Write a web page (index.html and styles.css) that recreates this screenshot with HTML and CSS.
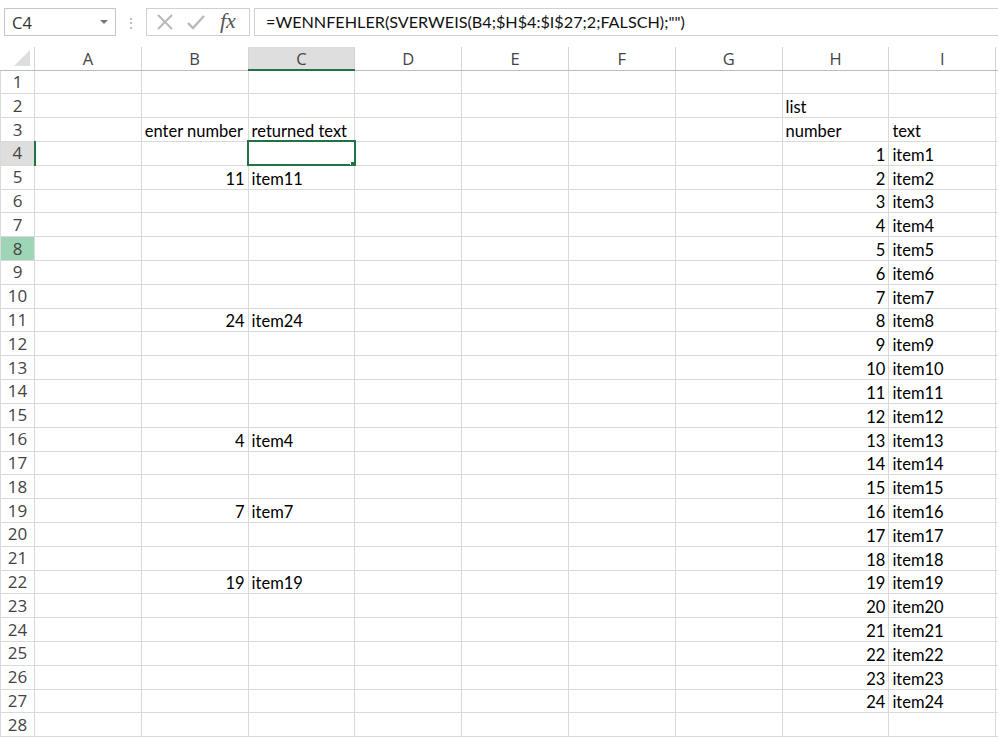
FILE: index.html
```html
<!DOCTYPE html>
<html>
<head>
<meta charset="utf-8">
<link rel="stylesheet" href="styles.css">
</head>
<body>
<div class="app">
  <div class="fbar">
    <div class="namebox"><span class="nb-text">C4</span><span class="nb-arrow"></span></div>
    <div class="dots">⋮</div>
    <div class="btns">
      <svg class="ico" width="22" height="22" viewBox="0 0 22 22"><path d="M4 4 L18 18 M18 4 L4 18" stroke="#b9b9b9" stroke-width="2" fill="none"/></svg>
      <svg class="ico" width="22" height="22" viewBox="0 0 22 22"><path d="M3 12 L8 17 L19 5" stroke="#b9b9b9" stroke-width="2.4" fill="none"/></svg>
      <span class="fx">fx</span>
    </div>
    <div class="formula">=WENNFEHLER(SVERWEIS(B4;$H$4:$I$27;2;FALSCH);"")</div>
  </div>
  <table class="sheet">
    <colgroup><col class="c-rh"><col class="c"><col class="c"><col class="c"><col class="c"><col class="c"><col class="c"><col class="c"><col class="c"><col class="c"><col class="c-rest"></colgroup>
    <thead>
      <tr class="hdr"><th class="corner"><span class="tri"></span></th><th>A</th><th>B</th><th class="sel-col">C</th><th>D</th><th>E</th><th>F</th><th>G</th><th>H</th><th>I</th><th></th></tr>
    </thead>
    <tbody>
      <tr><th>1</th><td></td><td></td><td></td><td></td><td></td><td></td><td></td><td></td><td></td><td></td></tr>
      <tr><th>2</th><td></td><td></td><td></td><td></td><td></td><td></td><td></td><td>list</td><td></td><td></td></tr>
      <tr><th>3</th><td></td><td>enter number</td><td>returned text</td><td></td><td></td><td></td><td></td><td>number</td><td>text</td><td></td></tr>
      <tr><th class="sel-row">4</th><td></td><td></td><td class="active"><span class="handle"></span></td><td></td><td></td><td></td><td></td><td class="n">1</td><td>item1</td><td></td></tr>
      <tr><th>5</th><td></td><td class="n">11</td><td>item11</td><td></td><td></td><td></td><td></td><td class="n">2</td><td>item2</td><td></td></tr>
      <tr><th>6</th><td></td><td></td><td></td><td></td><td></td><td></td><td></td><td class="n">3</td><td>item3</td><td></td></tr>
      <tr><th>7</th><td></td><td></td><td></td><td></td><td></td><td></td><td></td><td class="n">4</td><td>item4</td><td></td></tr>
      <tr><th class="hov-row">8</th><td></td><td></td><td></td><td></td><td></td><td></td><td></td><td class="n">5</td><td>item5</td><td></td></tr>
      <tr><th>9</th><td></td><td></td><td></td><td></td><td></td><td></td><td></td><td class="n">6</td><td>item6</td><td></td></tr>
      <tr><th>10</th><td></td><td></td><td></td><td></td><td></td><td></td><td></td><td class="n">7</td><td>item7</td><td></td></tr>
      <tr><th>11</th><td></td><td class="n">24</td><td>item24</td><td></td><td></td><td></td><td></td><td class="n">8</td><td>item8</td><td></td></tr>
      <tr><th>12</th><td></td><td></td><td></td><td></td><td></td><td></td><td></td><td class="n">9</td><td>item9</td><td></td></tr>
      <tr><th>13</th><td></td><td></td><td></td><td></td><td></td><td></td><td></td><td class="n">10</td><td>item10</td><td></td></tr>
      <tr><th>14</th><td></td><td></td><td></td><td></td><td></td><td></td><td></td><td class="n">11</td><td>item11</td><td></td></tr>
      <tr><th>15</th><td></td><td></td><td></td><td></td><td></td><td></td><td></td><td class="n">12</td><td>item12</td><td></td></tr>
      <tr><th>16</th><td></td><td class="n">4</td><td>item4</td><td></td><td></td><td></td><td></td><td class="n">13</td><td>item13</td><td></td></tr>
      <tr><th>17</th><td></td><td></td><td></td><td></td><td></td><td></td><td></td><td class="n">14</td><td>item14</td><td></td></tr>
      <tr><th>18</th><td></td><td></td><td></td><td></td><td></td><td></td><td></td><td class="n">15</td><td>item15</td><td></td></tr>
      <tr><th>19</th><td></td><td class="n">7</td><td>item7</td><td></td><td></td><td></td><td></td><td class="n">16</td><td>item16</td><td></td></tr>
      <tr><th>20</th><td></td><td></td><td></td><td></td><td></td><td></td><td></td><td class="n">17</td><td>item17</td><td></td></tr>
      <tr><th>21</th><td></td><td></td><td></td><td></td><td></td><td></td><td></td><td class="n">18</td><td>item18</td><td></td></tr>
      <tr><th>22</th><td></td><td class="n">19</td><td>item19</td><td></td><td></td><td></td><td></td><td class="n">19</td><td>item19</td><td></td></tr>
      <tr><th>23</th><td></td><td></td><td></td><td></td><td></td><td></td><td></td><td class="n">20</td><td>item20</td><td></td></tr>
      <tr><th>24</th><td></td><td></td><td></td><td></td><td></td><td></td><td></td><td class="n">21</td><td>item21</td><td></td></tr>
      <tr><th>25</th><td></td><td></td><td></td><td></td><td></td><td></td><td></td><td class="n">22</td><td>item22</td><td></td></tr>
      <tr><th>26</th><td></td><td></td><td></td><td></td><td></td><td></td><td></td><td class="n">23</td><td>item23</td><td></td></tr>
      <tr><th>27</th><td></td><td></td><td></td><td></td><td></td><td></td><td></td><td class="n">24</td><td>item24</td><td></td></tr>
      <tr><th>28</th><td></td><td></td><td></td><td></td><td></td><td></td><td></td><td></td><td></td><td></td></tr>
    </tbody>
  </table>
</div>
</body>
</html>
```

FILE: styles.css
```css
html, body {
  margin: 0;
  padding: 0;
  background: #ffffff;
  overflow: hidden;
}
.app {
  width: 998px;
  height: 739px;
  overflow: hidden;
  font-family: "Lato", "Liberation Sans", sans-serif;
  color: #000;
}
.fbar {
  display: flex;
  align-items: center;
  height: 28px;
  padding: 8px 0 0 4px;
}
.namebox {
  box-sizing: border-box;
  width: 112px;
  height: 28px;
  border: 1px solid #c6c6c6;
  display: flex;
  align-items: center;
  justify-content: space-between;
  padding: 0 7px 0 7px;
  font-family: "Open Sans", sans-serif;
  font-size: 16.5px;
  color: #333;
}
.nb-arrow {
  width: 0;
  height: 0;
  border-left: 4px solid transparent;
  border-right: 4px solid transparent;
  border-top: 4px solid #777;
}
.dots {
  width: 30px;
  text-align: center;
  color: #aaa;
  font-size: 14px;
}
.btns {
  box-sizing: border-box;
  width: 104px;
  height: 28px;
  border: 1px solid #d0d0d0;
  display: flex;
  align-items: center;
  gap: 9px;
  padding-left: 7px;
}
.fx {
  font-family: "Liberation Serif", serif;
  font-style: italic;
  font-size: 22px;
  line-height: 22px;
  color: #555;
  margin-left: 4px;
  margin-top: -3px;
}
.formula {
  box-sizing: border-box;
  flex: 1;
  height: 28px;
  margin-left: 4px;
  border: 1px solid #d0d0d0;
  border-right: none;
  padding-left: 11px;
  font-size: 16.2px;
  line-height: 26px;
  color: #111;
  white-space: nowrap;
}
.sheet {
  margin-top: 11px;
  border-collapse: collapse;
  table-layout: fixed;
  width: 1010px;
}
.c-rh { width: 34px; }
.c { width: 106.8px; }
.c-rest { width: 14px; }
.sheet th, .sheet td {
  border: 1px solid #dadada;
  padding: 0 3px;
  white-space: nowrap;
  overflow: hidden;
  box-sizing: border-box;
}
.hdr th {
  height: 23px;
  line-height: 20px;
  padding-top: 1px;
  font-family: "Open Sans", sans-serif;
  font-weight: normal;
  font-size: 16.5px;
  color: #444;
  text-align: center;
  border-top: none;
  border-color: #d4d4d4;
  border-bottom-color: #bdbdbd;
}
.hdr th.corner {
  position: relative;
  border-left: none;
}
.tri {
  position: absolute;
  right: 4px;
  bottom: 4px;
  width: 0;
  height: 0;
  border-left: 16px solid transparent;
  border-bottom: 16px solid #dedede;
}
.hdr th.sel-col {
  background: #dedede;
  border-bottom: 2px solid #217346;
}
tbody tr {
  height: 23.82px;
}
tbody th {
  font-family: "Open Sans", sans-serif;
  font-weight: normal;
  font-size: 17px;
  color: #444;
  text-align: center;
  border-left: none;
  border-right-color: #bdbdbd;
  padding: 1px 0 0 0;
  line-height: 20px;
}
tbody th.sel-row {
  background: #dedede;
  border-right: 2px solid #217346;
}
tbody th.hov-row {
  background: #9fd5b7;
}
tbody td {
  font-size: 16.5px;
  padding-top: 0;
  padding-bottom: 0;
  line-height: 19px;
  vertical-align: bottom;
}
tbody td.n {
  text-align: right;
}
td.active {
  position: relative;
  outline: 2px solid #217346;
  outline-offset: -1px;
}
.handle {
  position: absolute;
  right: -4px;
  bottom: -4px;
  width: 6px;
  height: 6px;
  background: #217346;
  border: 1px solid #fff;
}
```
